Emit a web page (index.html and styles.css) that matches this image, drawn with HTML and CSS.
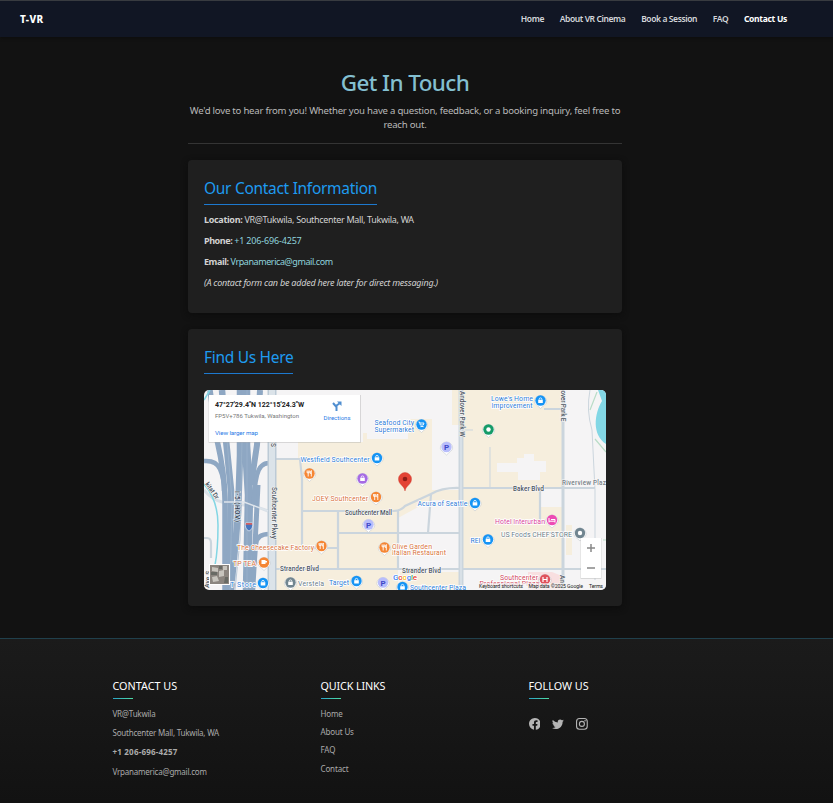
FILE: index.html
```html
<!DOCTYPE html>
<html lang="en">
<head>
<meta charset="utf-8">
<title>Contact Us | T-VR</title>
<link rel="stylesheet" href="styles.css">
</head>
<body>
<header class="navbar">
  <a class="brand">T-VR</a>
  <nav class="nav">
    <a>Home</a><a>About VR Cinema</a><a>Book a Session</a><a>FAQ</a><a class="active">Contact Us</a>
  </nav>
</header>
<main class="main">
  <section class="intro">
    <h1>Get In Touch</h1>
    <p>We'd love to hear from you! Whether you have a question, feedback, or a booking inquiry, feel free to<br>reach out.</p>
  </section>
  <section class="card info">
    <h2>Our Contact Information</h2>
    <p class="i1"><b>Location:</b> VR@Tukwila, Southcenter Mall, Tukwila, WA</p>
    <p><b>Phone:</b> <a class="tel">+1 206-696-4257</a></p>
    <p><b>Email:</b> <a class="email">Vrpanamerica@gmail.com</a></p>
    <p class="note"><em>(A contact form can be added here later for direct messaging.)</em></p>
  </section>
  <section class="card find">
    <h2>Find Us Here</h2>
    <svg class="map" viewBox="204 390 402 200" font-family="Roboto, sans-serif">
      <defs>
        <g id="pin"><path d="M-6.2 1.2A6.2 6.2 0 1 1 6.2 1.2C5.8 4 3.2 4.600 0 8C-3.200 4.600-5.800 4-6.200 1.200Z" fill="#fff" stroke="#b9bfc5" stroke-width=".5"/><circle r="5.200" fill="currentColor"/></g>
        <g id="bag"><use href="#pin"/><path d="M-2.300-.8h4.600v3.300h-4.600z" fill="#fff"/><path d="M-1.300-.8v-.5a1.300 1.300 0 0 1 2.600 0v.5" fill="none" stroke="#fff" stroke-width=".8"/></g>
        <g id="food"><use href="#pin"/><path d="M-1.300-3v6M-2.400-3v2.300h2.200V-3M1.800 3v-6Q.6-2 .8 0H1.800" fill="none" stroke="#fff" stroke-width=".9"/></g>
        <g id="park"><use href="#pin" color="#b8bdfb"/><text y="3" text-anchor="middle" font-size="8" font-weight="700" fill="#3e48c8">P</text></g>
      </defs>
      <path fill="#f5f4f5" d="M204 390h402v200H204z"/>
      <g fill="#f6eedd">
        <path d="M298 442h65v-9h45v-14h24v71h29v10h-30l-33 18v72H276V459h22z"/>
        <path d="M452 390h111v99H461v-64h-9zM461 489h80v18h21v62H461zM566 525h6v30h-6zM400 572h60v18h-60z"/>
      </g>
      <path fill="#f5f4f5" d="M367 425h41v14h-41zM497 463h20v-5h7v-4h10v7h12v11h-6v8h-22v-8h-21z"/>
      <path fill="#f8dfe0" d="M528 572h24l10 4v14h-34z"/>
      <g fill="none" stroke="#cbd5dd" stroke-width="2.200">
        <path d="M276 459h24l2 20v69h35M303 511h90q8 0 12-5l26-12q12-7 30-6h134M338 512v57M338 533h123M398 511v58M431 494l-3 39M276 569h330M540 489v35M563 409h-19"/>
        <path stroke-width="1" d="M490 447v41M590 390q-4 20 2 40l3 60v90M461 430h12"/>
        <path d="M204 490q8 10 18 12t22 3 24 6" stroke="#d9e0e7" stroke-width="3"/>
        <path d="M204 538h3q4 0 4 5v15"/>
        <path stroke-width="3" d="M563 390v200"/>
        <path stroke-width="5" d="M461 390v200"/>
        <path stroke="#e5ebf0" stroke-width="1" d="M461 390v200"/>
      </g>
      <g fill="none" stroke="#8ea7c3">
        <path stroke-width="5.500" d="M210 390l7 50q8 35 8 60v90"/>
        <path stroke-width="6.500" d="M222 390l4 50 5 50-2 100"/>
        <path stroke-width="6.500" d="M240 390v65l-2 60-7 75"/>
        <path stroke-width="8.500" d="M246 390v55l3 50-2 95"/>
        <path stroke-width="6" d="M260 390l-3 55-6 40"/>
        <path stroke-width="5" d="M258 485l-3 60-4 45"/>
        <path stroke-width="4.500" d="M204 461q12-1 16 8t4 22M269 463q-9 0-12 12t-3 30M269 534q-12 0-13 10t-3 46"/>
      </g>
      <g fill="none" stroke="#9fb6cd" stroke-width=".7"><path d="M227 440l5 60-2 90M247 390v200M242 440l-2 100-5 50"/></g>
      <path stroke="#bccad6" stroke-width="9" d="M272 390v200"/>
      <path stroke="#dbe3e9" stroke-width="6" d="M272 390v200"/>
      <path stroke="#dde4eb" stroke-width="1.500" d="M224 502h20l24 9" fill="none"/>
      <path fill="none" stroke="#83d6e4" stroke-width="1.500" d="M204 484q14 16 14 41t-3 40M204 400l6-10"/>
      <path fill="#83d7e5" d="M598 390h8v54c-14-9-12-30-4-43z"/>
      <path fill="none" stroke="#b9dcc7" stroke-width="1.200" d="M590 410l7-18M595 439l11 13M603 540h3"/>

      <g fill="#4c5661" stroke="#f6f5f5" stroke-width="1.200" paint-order="stroke" font-size="6.500" font-weight="500">
        <text x="513" y="490.500" textLength="31">Baker Blvd</text>
        <text x="345" y="514.500" textLength="47">Southcenter Mall</text>
        <text x="280" y="571" textLength="39">Strander Blvd</text>
        <text x="402" y="572.500" textLength="39">Strander Blvd</text>
        <text x="562" y="484.500" textLength="44" fill="#777f88">Riverview Plaz</text>
        <text transform="translate(460 391) rotate(90)" textLength="46">Andover Park W</text>
        <text transform="translate(561 390.500) rotate(90)" textLength="31">over Park E</text>
        <text transform="translate(272 487) rotate(90)" textLength="52">Southcenter Pkwy</text>
        <text transform="translate(235 491) rotate(90)" textLength="31" fill="#2f3e52" stroke="#dfe8f1">I-5 (HOV)</text>
        <text transform="translate(205 484) rotate(55)" textLength="19">kitat Dr</text>
        <text transform="translate(271 443) rotate(90)">S</text>
        <text transform="translate(560 575) rotate(90)">An</text>
        <text transform="translate(209 588) rotate(-85)" textLength="17">Ave S</text>
      </g>
      <path d="M245.500 523h7q1 6-3.500 8-4.500-2-3.500-8" fill="#4775bd" stroke="#fff" stroke-width=".6"/><path d="M245.800 523h6.400v1.800h-6.400z" fill="#d45f5f"/>
      <g stroke="#fff" stroke-width="1.400" paint-order="stroke" font-size="7" fill="#2d7cd8">
        <text x="374.500" y="424.500" textLength="39.500">Seafood City</text>
        <text x="374.500" y="431.500" textLength="39.500">Supermarket</text>
        <text x="300.500" y="461.500" textLength="69">Westfield Southcenter</text>
        <text x="491" y="401" textLength="42">Lowe's Home</text>
        <text x="491.500" y="408" textLength="41">Improvement</text>
        <text x="417.500" y="506" textLength="50">Acura of Seattle</text>
        <text x="470.500" y="543" textLength="10">REI</text>
        <text x="329" y="584.500" textLength="20">Target</text>
        <text x="410" y="589.500" textLength="56">Southcenter Plaza</text>
        <text x="230" y="586.500" textLength="26">T Store</text>
        <g fill="#d9733d">
          <text x="312" y="500.500" textLength="56">JOEY Southcenter</text>
          <text x="237" y="549.500" textLength="77">The Cheesecake Factory</text>
          <text x="392" y="548.500" textLength="40">Olive Garden</text>
          <text x="392" y="555" textLength="54">Italian Restaurant</text>
          <text x="233" y="566" textLength="23">TP TEA</text>
        </g>
        <text x="495" y="523.500" textLength="50" fill="#d9429a">Hotel Interurban</text>
        <g fill="#6c7d89"><text x="501" y="536.500" textLength="71">US Foods CHEF'STORE</text><text x="298" y="586" textLength="26">Verstela</text></g>
        <g fill="#d0455a"><text x="500" y="579.500" textLength="38">Southcenter</text><text x="479.500" y="586" textLength="60">Professional Plaza</text></g>
      </g>
      <g color="#1694f4">
        <use href="#pin" x="421.500" y="424.500"/><path d="M418.500 422h1l.8 3h3l.7-2h-4m.5 3.500h3M420.500 427.500h.1M423 427.500h.1" stroke="#fff" stroke-width=".9" fill="none"/>
        <use href="#bag" x="377" y="458"/><use href="#bag" x="540.500" y="400.500"/><use href="#bag" x="475" y="503"/><use href="#bag" x="488" y="539.500"/><use href="#bag" x="356.500" y="581"/><use href="#bag" x="263" y="583"/><use href="#bag" x="402.500" y="587"/>
      </g>
      <g color="#f58634"><use href="#food" x="309.500" y="473.500"/><use href="#food" x="376" y="497"/><use href="#food" x="321.500" y="546"/><use href="#food" x="384.500" y="547.500"/><use href="#pin" x="264" y="562.500"/><path d="M261.500 560h4v4h-4zM265.500 561h1.500v1.500h-1.500" fill="#fff"/></g>
      <use href="#park" x="446.500" y="447"/><use href="#park" x="368.500" y="524.500"/><use href="#park" x="383" y="582.500"/>
      <use href="#bag" x="362.500" y="478.500" color="#a66be3"/>
      <use href="#pin" x="488.500" y="429.500" color="#159b68"/><circle cx="488.500" cy="429.500" r="2.200" fill="#fff"/>
      <use href="#pin" x="580" y="533" color="#718590"/><circle cx="580" cy="533" r="2.200" fill="#fff"/>
      <use href="#bag" x="290.500" y="582.500" color="#718590"/>
      <use href="#pin" x="552" y="520" color="#ed4bb4"/><path d="M549 518v4.500m0-1.300h6v1.300m0-1.500v-1.500h-4" stroke="#fff" fill="none"/>
      <use href="#pin" x="545" y="579.500" color="#e0525c"/><path d="M543 577v5M547 577v5M543 579.500h4" stroke="#fff" stroke-width="1.200"/>
      <path d="M405 491c-1-6-6.500-6-6.500-12a6.500 6.500 0 0 1 13 0c0 6-5.500 6-6.500 12" fill="#e34335" stroke="#c93428" stroke-width=".4"/><circle cx="405" cy="479" r="2.300" fill="#8e1d18"/>

      <path d="M208.500 395h152.500v48H208.500z" fill="#aaa" opacity=".4"/><path d="M209 395h151v47H209z" fill="#fff"/>
      <text x="215" y="406.800" textLength="89" font-size="7" font-weight="700" fill="#222">47°27'29.4"N 122°15'24.3"W</text>
      <text x="215" y="418" textLength="84" font-size="6" fill="#777">FP5V+786 Tukwila, Washington</text>
      <text x="215" y="435" textLength="43" font-size="6.200" fill="#287ae6">View larger map</text>
      <text x="323.500" y="420" textLength="27" font-size="6" fill="#287ae6">Directions</text>
      <path d="M336.500 411v-4l-3.500-4M336.500 408v-2.500l3-2" fill="none" stroke="#4f8ed0" stroke-width="2"/><path d="M337 401.500h4.500v4.500z" fill="#4f8ed0"/>
      <path d="M209 564h21v21h-21z" fill="#fff"/><path d="M210 565h19v19h-19z" fill="#8b857f"/><path d="M212 567l6 1v4l-6-1zM219 571l5-1v6l-5 1zM212 577l5-1 2 5-6 1zM223 566h4v4h-4z" fill="#c7c4bd"/><path d="M219 566h3v3h-3zM225 577h3v6h-4zM211 572h6v3h-6z" fill="#686a64"/>
      <path d="M580.500 538h21v41h-21z" fill="#bbb" opacity=".5"/><path d="M581 538h20v40h-20z" fill="#fff"/><path d="M587 548h8M591 544v8M587 568h8" stroke="#888" stroke-width="1.500"/>
      <path d="M478 583h128v7H478z" fill="#f5f5f5" opacity=".65"/>
      <g font-size="5.200" fill="#222"><text x="479" y="588" textLength="44">Keyboard shortcuts</text><text x="528.500" y="588" textLength="54.500">Map data ©2025 Google</text><text x="589" y="588" textLength="14">Terms</text></g>
      <text x="393" y="579.700" textLength="24" font-size="8" font-weight="500" stroke="#fff" stroke-width="1.400" paint-order="stroke"><tspan fill="#4285f4">G</tspan><tspan fill="#ea4335">o</tspan><tspan fill="#fbbc05">o</tspan><tspan fill="#4285f4">g</tspan><tspan fill="#34a853">l</tspan><tspan fill="#ea4335">e</tspan></text>
    </svg>
  </section>
</main>
<footer class="footer">
  <div class="col contact"><h3>CONTACT US</h3><p>VR@Tukwila</p><p>Southcenter Mall, Tukwila, WA</p><p class="phone"><b>+1 206-696-4257</b></p><p class="mail">Vrpanamerica@gmail.com</p></div>
  <div class="col links"><h3>QUICK LINKS</h3><a>Home</a><a>About Us</a><a>FAQ</a><a>Contact</a></div>
  <div class="col follow"><h3>FOLLOW US</h3>
    <div class="social">
      <svg viewBox="0 0 16 16"><path d="M16 8.049c0-4.446-3.582-8.050-8-8.050C3.580 0-.002 3.603-.002 8.050c0 4.017 2.926 7.347 6.750 7.951v-5.625h-2.030V8.050H6.750V6.275c0-2.017 1.195-3.131 3.022-3.131.876 0 1.791.157 1.791.157v1.980h-1.009c-.993 0-1.303.621-1.303 1.258v1.510h2.218l-.354 2.326H9.250V16c3.824-.604 6.750-3.934 6.750-7.951"/></svg>
      <svg viewBox="0 0 16 16"><path d="M5.026 15c6.038 0 9.341-5.003 9.341-9.334q.002-.211-.006-.422A6.700 6.700 0 0 0 16 3.542a6.700 6.700 0 0 1-1.889.518 3.300 3.300 0 0 0 1.447-1.817 6.500 6.500 0 0 1-2.087.793A3.286 3.286 0 0 0 7.875 6.030a9.320 9.320 0 0 1-6.767-3.429 3.290 3.290 0 0 0 1.018 4.382A3.300 3.300 0 0 1 .64 6.575v.045a3.290 3.290 0 0 0 2.632 3.218 3.200 3.200 0 0 1-.865.115 3 3 0 0 1-.614-.057 3.280 3.280 0 0 0 3.067 2.277A6.600 6.600 0 0 1 .78 13.580a6 6 0 0 1-.78-.045A9.340 9.340 0 0 0 5.026 15"/></svg>
      <svg viewBox="0 0 16 16"><g fill="none" stroke="currentColor" stroke-width="1.500"><rect x=".75" y=".75" width="14.500" height="14.500" rx="4"/><circle cx="8" cy="8" r="3.400"/></g><circle cx="12.300" cy="3.700" r="1"/></svg>
    </div>
  </div>
</footer>
</body>
</html>
```
FILE: styles.css
```css
* { box-sizing: border-box; }
body {
  margin: 0;
  min-height: 803px;
  background: #121212;
  color: #d2d2d2;
  font-family: "Noto Sans", "Open Sans", sans-serif;
  font-size: 9px;
}
h1, h2, h3, p { margin: 0; white-space: nowrap; }
.navbar {
  height: 37px;
  padding: 0 46px 1px 20px;
  border-top: 1px solid #383b40;
  background: #111624;
  box-shadow: 0 1px 3px #0d0d0d;
  display: flex;
  align-items: center;
  justify-content: space-between;
}
.brand { color: #fff; font-size: 10px; font-weight: 800; letter-spacing: .4px; }
.nav { display: flex; gap: 15.7px; font-size: 8.5px; font-weight: 600; letter-spacing: -.4px; color: #d4d6da; white-space: nowrap; }
.nav .active { color: #fff; font-weight: 700; letter-spacing: -.3px; }
.main { width: 434px; margin-left: 188px; }
.intro { height: 107px; padding-top: 31px; border-bottom: 1px solid #343434; text-align: center; }
.intro h1 { font-size: 22.5px; line-height: 29px; font-weight: 500; letter-spacing: -.6px; color: #83bfd0; }
.intro p { margin-top: 7px; font-size: 9.6px; line-height: 14px; letter-spacing: -.23px; color: #b9b9b9; }
.card { padding: 16px; border-radius: 4px; background: #1f1f1f; box-shadow: 0 2px 6px #0c0c0c; }
.card h2 { width: max-content; border-bottom: 1px solid #1d79cf; color: #1e9bf0; font-weight: 400; font-size: 15.5px; line-height: 24px; height: 29px; letter-spacing: -.3px; }
.info { height: 153px; margin-top: 16px; }
.info p { height: 21px; line-height: 15px; font-size: 9px; letter-spacing: -.42px; }
.info .i1 { margin-top: 7px; letter-spacing: -.32px; }
.info .note { letter-spacing: -.22px; }
.info a { color: #8fd3dd; }
.info .tel { letter-spacing: -.17px; }
.find { height: 277px; margin-top: 16px; }
.map { display: block; width: 402px; height: 200px; margin-top: 16px; border-radius: 5px; }
.footer {
  height: 165px;
  margin-top: 32px;
  padding: 39px 0 0 112.5px;
  border-top: 1px solid #20404c;
  background: linear-gradient(#1b1b1b, #121212);
  display: grid;
  grid-template-columns: 208px 208px 208px;
  color: #aaa;
}
.col { display: flex; flex-direction: column; align-items: flex-start; font-size: 8px; }
.col h3 { height: 21px; line-height: 16px; color: #fff; font-size: 10.8px; font-weight: 400; letter-spacing: 0; }
.col h3::after { content: ""; display: block; width: 20px; height: 1px; margin-top: 4px; background: linear-gradient(90deg, #2aa4c6, #4edca4); }
.links h3 { letter-spacing: -.15px; }
.contact p { height: 19px; line-height: 12px; letter-spacing: -.22px; }
.contact p:first-of-type { margin-top: 8.5px; }
.contact .phone { letter-spacing: .2px; }
.contact .mail { margin-top: 1px; }
.links a { height: 18.4px; line-height: 12px; letter-spacing: -.15px; }
.links a:first-of-type { margin-top: 8.5px; }
.social { display: flex; gap: 12px; margin-top: 19px; color: #b4b4b4; }
.social svg { width: 11.800px; height: 11.800px; fill: currentColor; }
```
